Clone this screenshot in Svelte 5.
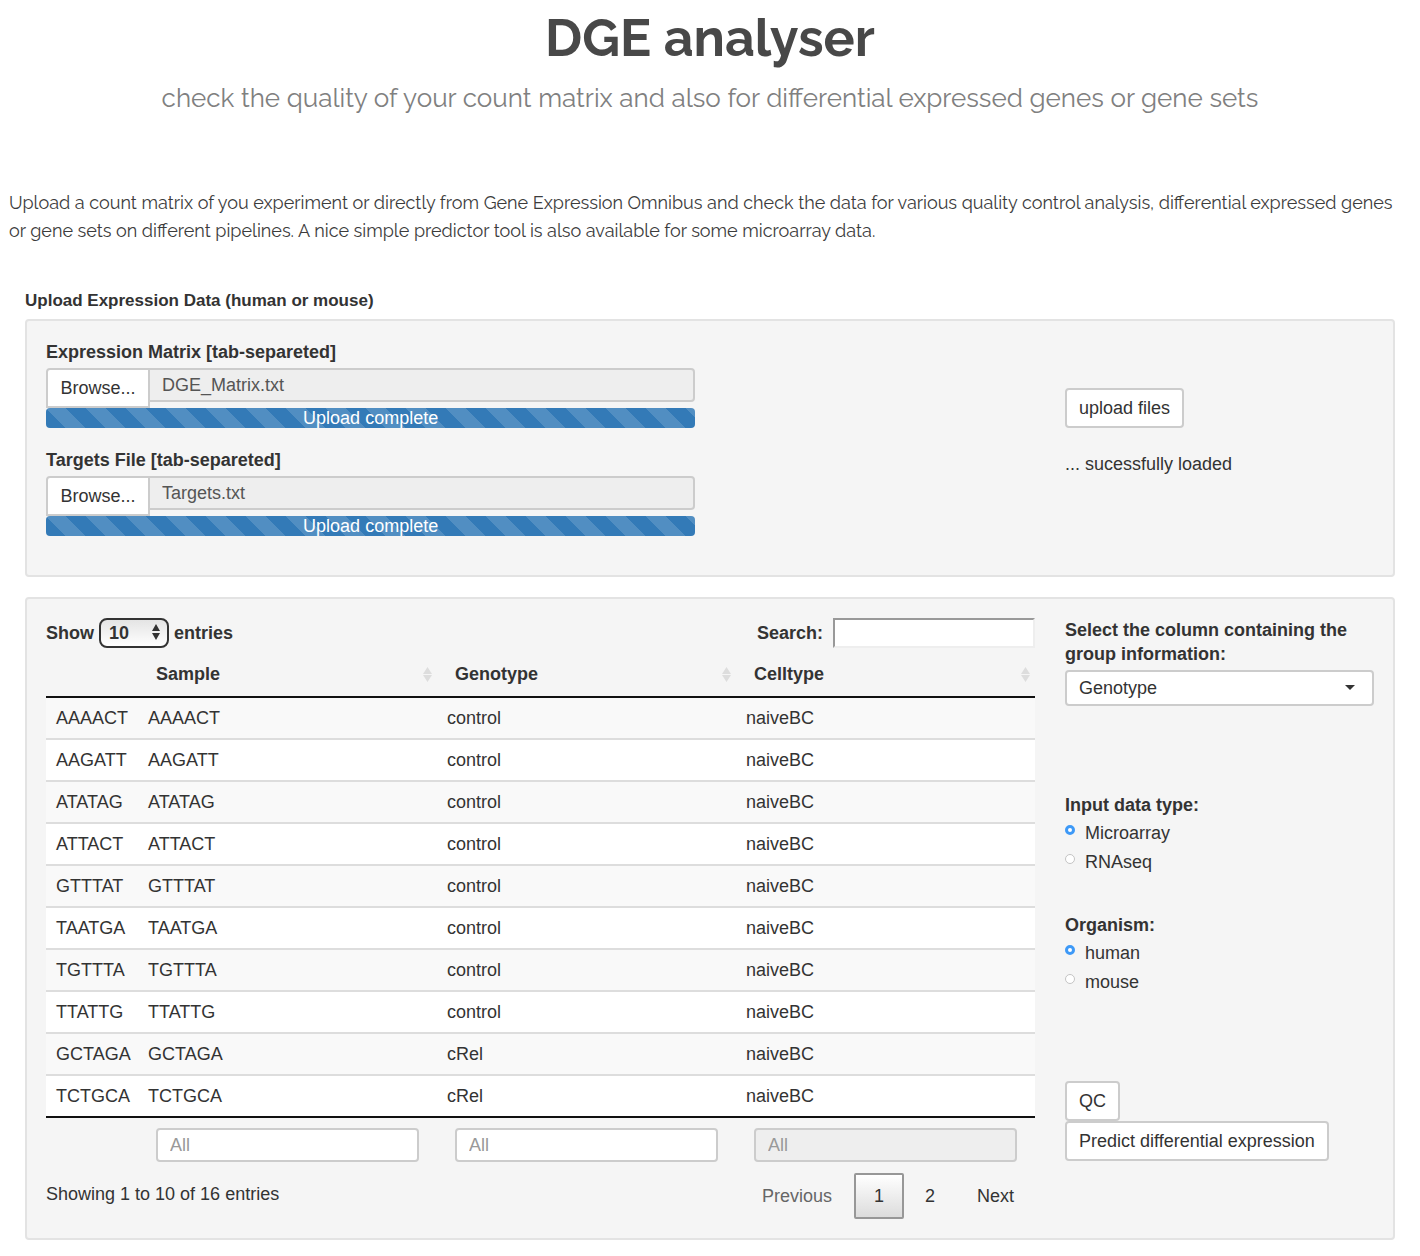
<script>
  const files = [
    { id: 'matrix', label: 'Expression Matrix [tab-separeted]', name: 'DGE_Matrix.txt' },
    { id: 'targets', label: 'Targets File [tab-separeted]', name: 'Targets.txt' },
  ];
  const columns = ['Sample', 'Genotype', 'Celltype'];
  const rows = [
    ['AAAACT', 'control'],
    ['AAGATT', 'control'],
    ['ATATAG', 'control'],
    ['ATTACT', 'control'],
    ['GTTTAT', 'control'],
    ['TAATGA', 'control'],
    ['TGTTTA', 'control'],
    ['TTATTG', 'control'],
    ['GCTAGA', 'cRel'],
    ['TCTGCA', 'cRel'],
  ];
  const choices = [
    { name: 'datatype', title: 'Input data type:', options: ['Microarray', 'RNAseq'] },
    { name: 'organism', title: 'Organism:', options: ['human', 'mouse'] },
  ];
  let selected = $state({ datatype: 'Microarray', organism: 'human' });
  let page = $state(1);
</script>

<main>
  <header>
    <h1>DGE analyser</h1>
    <p class="tagline">check the quality of your count matrix and also for differential expressed genes or gene sets</p>
  </header>

  <p class="intro">
    Upload a count matrix of you experiment or directly from Gene Expression Omnibus and check the data for various quality control analysis, differential expressed genes or gene sets on different pipelines. A nice simple predictor tool is also available for some microarray data.
  </p>

  <div class="content">
    <h2>Upload Expression Data (human or mouse)</h2>

    <section class="well">
      <div class="uploads">
        {#each files as file}
          <div class="upload">
            <label for={file.id}>{file.label}</label>
            <div class="group">
              <button type="button" class="btn browse">Browse...</button>
              <input id={file.id} class="field" type="text" readonly value={file.name} />
            </div>
            <div class="progress">Upload complete</div>
          </div>
        {/each}
      </div>
      <div class="side send">
        <button type="button" class="btn">upload files</button>
        <p>... sucessfully loaded</p>
      </div>
    </section>

    <section class="well">
      <div class="data">
        <div class="toolbar">
          <label class="length">
            Show
            <span class="picker">
              <select>
                <option>10</option>
                <option>25</option>
                <option>50</option>
              </select>
              <svg width="8" height="16" viewBox="0 0 8 16" aria-hidden="true"><path d="M4 0l4 7H0zM4 16l4-7H0z" /></svg>
            </span>
            entries
          </label>
          <label class="search">Search: <input type="search" /></label>
        </div>
        <table>
          <thead>
            <tr>
              <th class="key"></th>
              {#each columns as column}
                <th>
                  <div class="head">
                    {column}
                    <svg width="9" height="15" viewBox="0 0 9 15" aria-hidden="true"><path d="M4.500 0l4.500 7H0zM4.500 15l4.500-7H0z" /></svg>
                  </div>
                </th>
              {/each}
            </tr>
          </thead>
          <tbody>
            {#each rows as [sample, genotype]}
              <tr><td>{sample}</td><td>{sample}</td><td>{genotype}</td><td>naiveBC</td></tr>
            {/each}
          </tbody>
          <tfoot>
            <tr>
              <td></td>
              {#each columns as column}
                <td><input class="field" type="text" placeholder="All" aria-label={column} disabled={column === 'Celltype'} /></td>
              {/each}
            </tr>
          </tfoot>
        </table>
        <div class="footer">
          <p>Showing 1 to 10 of 16 entries</p>
          <nav aria-label="Pages">
            <button type="button" class="step" disabled={page === 1} onclick={() => (page = 1)}>Previous</button>
            {#each [1, 2] as n}
              <button type="button" class:current={page === n} onclick={() => (page = n)}>{n}</button>
            {/each}
            <button type="button" class="step" onclick={() => (page = 2)}>Next</button>
          </nav>
        </div>
      </div>

      <div class="side">
        <label for="group">Select the column containing the group information:</label>
        <div class="dropdown">
          <select id="group">
            <option>Genotype</option>
            <option>Celltype</option>
          </select>
          <svg width="10" height="5" viewBox="0 0 10 5" aria-hidden="true"><path d="M0 0h10L5 5z" /></svg>
        </div>
        {#each choices as choice}
          <fieldset>
            <legend>{choice.title}</legend>
            {#each choice.options as option}
              <label class="radio">
                <input type="radio" name={choice.name} value={option} bind:group={selected[choice.name]} />
                {option}
              </label>
            {/each}
          </fieldset>
        {/each}
        <div class="actions">
          <button type="button" class="btn">QC</button>
          <button type="button" class="btn">Predict differential expression</button>
        </div>
      </div>
    </section>
  </div>
</main>

<style>
  :global(body) {
    margin: 0;
    background: #fff;
  }
  main {
    padding: 8px 9px 16px;
    font: 18px/24px 'Liberation Sans', Arial, sans-serif;
    color: #333;
  }
  main * {
    box-sizing: border-box;
  }
  h1, h2, p {
    margin: 0;
  }
  header {
    text-align: center;
    font-family: Raleway, Lato, sans-serif;
  }
  h1 {
    font-size: 52px;
    line-height: 60px;
    color: #484848;
  }
  .tagline {
    margin-top: 10px;
    font-size: 26px;
    line-height: 40px;
    color: #808080;
  }
  .intro {
    margin-top: 71px;
    font: 18px/28px Raleway, Lato, sans-serif;
    color: #3c3c3c;
  }
  .content {
    padding: 0 16px;
    margin-top: 44px;
  }
  h2 {
    margin-bottom: 6px;
    font-size: 17px;
    line-height: 24px;
  }
  .well {
    display: grid;
    grid-template-columns: minmax(0, 16fr) minmax(0, 5fr);
    gap: 30px;
    margin-bottom: 20px;
    padding: 19px;
    border: 2px solid #e3e3e3;
    border-radius: 4px;
    background: #f5f5f5;
  }
  button, input, select {
    font: inherit;
    color: inherit;
  }
  label, legend {
    font-weight: bold;
  }
  .uploads {
    width: calc(200% / 3 - 10px);
  }
  .upload {
    margin-bottom: 20px;
  }
  .upload label {
    display: block;
    margin-bottom: 4px;
  }
  .group {
    display: flex;
    align-items: flex-start;
  }
  .btn {
    height: 40px;
    padding: 0 12px;
    border: 2px solid #ccc;
    border-radius: 4px;
    background: #fff;
    white-space: nowrap;
  }
  .browse {
    width: 104px;
    flex: none;
    border-radius: 4px 0 0 0;
  }
  .field {
    width: 100%;
    min-width: 0;
    height: 34px;
    padding: 0 12px;
    border: 2px solid #ccc;
    border-radius: 4px;
    background: #fff;
    color: #555;
  }
  .field::placeholder {
    color: #999;
    opacity: 1;
  }
  .field:read-only, .field:disabled {
    background: #eee;
  }
  .group .field {
    margin-left: -2px;
    border-radius: 0 4px 4px 0;
  }
  .progress {
    height: 20px;
    border-radius: 4px;
    line-height: 20px;
    text-align: center;
    color: #fff;
    background: #337ab7 linear-gradient(45deg, rgba(255, 255, 255, 0.15) 25%, transparent 25%, transparent 50%, rgba(255, 255, 255, 0.15) 50%, rgba(255, 255, 255, 0.15) 75%, transparent 75%) 0 0 / 40px 40px;
  }
  .send {
    padding-top: 48px;
  }
  .send p {
    margin-top: 24px;
  }
  .toolbar {
    display: flex;
    justify-content: space-between;
    height: 30px;
  }
  .length {
    display: flex;
    align-items: center;
    gap: 5px;
  }
  .search {
    display: flex;
    align-items: center;
    gap: 10px;
  }
  .search input {
    width: 202px;
    height: 30px;
    border: 2px solid;
    border-color: #999 #eee #eee #999;
    background: #fff;
  }
  .picker, .dropdown {
    position: relative;
    display: block;
  }
  .picker select {
    display: block;
    width: 70px;
    height: 30px;
    padding: 0 8px;
    appearance: none;
    border: 2px solid #333;
    border-radius: 8px;
    background: linear-gradient(#e4e4e4, #fff);
    font-weight: bold;
  }
  .picker svg {
    position: absolute;
    top: 6px;
    right: 9px;
    fill: #333;
  }
  table {
    width: 100%;
    table-layout: fixed;
    border-collapse: separate;
    border-spacing: 0;
  }
  th {
    padding: 14px 5px 10px 18px;
    border-bottom: 2px solid #111;
    text-align: left;
  }
  .key {
    width: 92px;
    padding: 0;
  }
  .head {
    display: flex;
    align-items: center;
    justify-content: space-between;
  }
  .head svg {
    fill: #ddd;
  }
  tbody td {
    height: 42px;
    padding: 0 10px;
    border-bottom: 2px solid #ddd;
    background: #fff;
  }
  tbody tr:nth-child(odd) td {
    background: #f9f9f9;
  }
  tbody tr:last-child td {
    border-bottom-color: #111;
  }
  tfoot td {
    padding: 10px 18px 11px;
    line-height: 0;
  }
  .footer {
    display: flex;
    justify-content: space-between;
  }
  .footer p {
    padding-top: 9px;
  }
  nav {
    display: flex;
    gap: 1px;
  }
  nav button {
    min-width: 50px;
    height: 46px;
    padding: 0;
    border: 2px solid transparent;
    border-radius: 2px;
    background: none;
  }
  nav .step {
    padding: 0 19px;
  }
  nav button:disabled {
    color: #666;
  }
  nav .current {
    border-color: #979797;
    background: linear-gradient(#fff, #dcdcdc);
  }
  .dropdown {
    margin: 4px 0 87px;
  }
  .dropdown select {
    display: block;
    width: 100%;
    height: 36px;
    padding: 0 12px;
    appearance: none;
    border: 2px solid #ccc;
    border-radius: 4px;
    background: #fff;
  }
  .dropdown svg {
    position: absolute;
    top: 15px;
    right: 19px;
    fill: #333;
  }
  fieldset {
    margin: 0 0 39px;
    padding: 0;
    border: 0;
  }
  legend {
    margin-bottom: 4px;
    padding: 0;
  }
  .radio {
    display: flex;
    gap: 10px;
    margin-bottom: 5px;
    font-weight: normal;
  }
  .radio:last-child {
    margin-bottom: 0;
  }
  .radio input {
    width: 10px;
    height: 10px;
    margin: 4px 0 0;
    appearance: none;
    border: 1px solid #c4c4c4;
    border-radius: 50%;
    background: #fff;
  }
  .radio input:checked {
    border: 3px solid #3d99f7;
  }
  .actions {
    display: flex;
    flex-direction: column;
    align-items: flex-start;
    padding-top: 48px;
  }
</style>
